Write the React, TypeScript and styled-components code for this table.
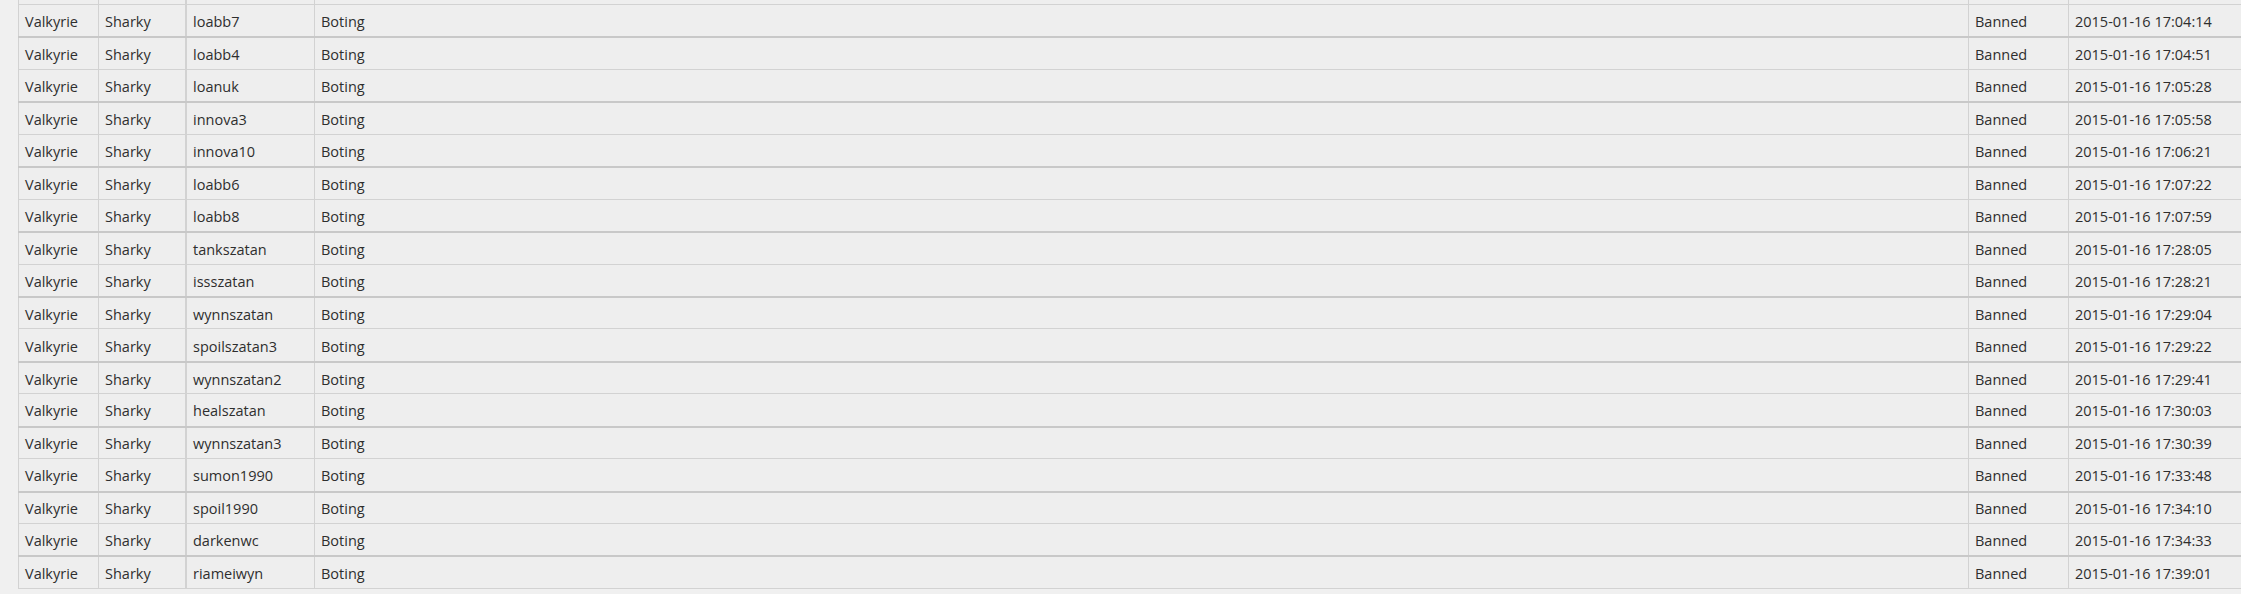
import React from "react";
import styled, { createGlobalStyle } from "styled-components";

const Global = createGlobalStyle`
  html, body {
    margin: 0;
    padding: 0;
    background: #f0f0f0;
    overflow: hidden;
  }
  body {
    font-family: "Open Sans", "Noto Sans", "Liberation Sans", sans-serif;
  }
`;

const COLS = "80px 87px 129px 1654px 100px 173px";

const Table = styled.div`
  margin-left: 18px;
  display: flex;
  flex-direction: column;
  width: max-content;
`;

const Row = styled.div<{ $thick?: boolean; $last?: boolean }>`
  display: grid;
  grid-template-columns: ${COLS};
  box-sizing: border-box;
  height: ${(p) => (p.$last ? "33.44px" : "32.44px")};
  border-top: ${(p) => (p.$thick ? "2px solid #c8c8c8" : "1px solid #d2d2d2")};
  border-bottom: ${(p) => (p.$last ? "1px solid #d2d2d2" : "none")};
  background: #eeeeee;
`;

const StubRow = styled.div`
  display: grid;
  grid-template-columns: ${COLS};
  height: 4px;
  background: #eeeeee;
`;

const Cell = styled.div<{ $wide?: boolean }>`
  box-sizing: border-box;
  border-left: ${(p) => (p.$wide ? "2px" : "1px")} solid #d2d2d2;
  padding: 2px 0 0 6px;
  display: flex;
  align-items: center;
  font-size: 14.5px;
  color: #2e2e2e;
  white-space: nowrap;
  overflow: hidden;
`;

const rows: [string, string][] = [
  ["loabb7", "17:04:14"],
  ["loabb4", "17:04:51"],
  ["loanuk", "17:05:28"],
  ["innova3", "17:05:58"],
  ["innova10", "17:06:21"],
  ["loabb6", "17:07:22"],
  ["loabb8", "17:07:59"],
  ["tankszatan", "17:28:05"],
  ["issszatan", "17:28:21"],
  ["wynnszatan", "17:29:04"],
  ["spoilszatan3", "17:29:22"],
  ["wynnszatan2", "17:29:41"],
  ["healszatan", "17:30:03"],
  ["wynnszatan3", "17:30:39"],
  ["sumon1990", "17:33:48"],
  ["spoil1990", "17:34:10"],
  ["darkenwc", "17:34:33"],
  ["riameiwyn", "17:39:01"],
];

export default function App() {
  return (
    <>
      <Global />
      <Table>
        <StubRow>
          <Cell />
          <Cell />
          <Cell $wide />
          <Cell />
          <Cell />
          <Cell />
        </StubRow>
        {rows.map(([name, time], i) => (
          <Row key={name} $thick={i % 2 === 1} $last={i === rows.length - 1}>
            <Cell>Valkyrie</Cell>
            <Cell>Sharky</Cell>
            <Cell $wide>{name}</Cell>
            <Cell>Boting</Cell>
            <Cell>Banned</Cell>
            <Cell>2015-01-16 {time}</Cell>
          </Row>
        ))}
      </Table>
    </>
  );
}
